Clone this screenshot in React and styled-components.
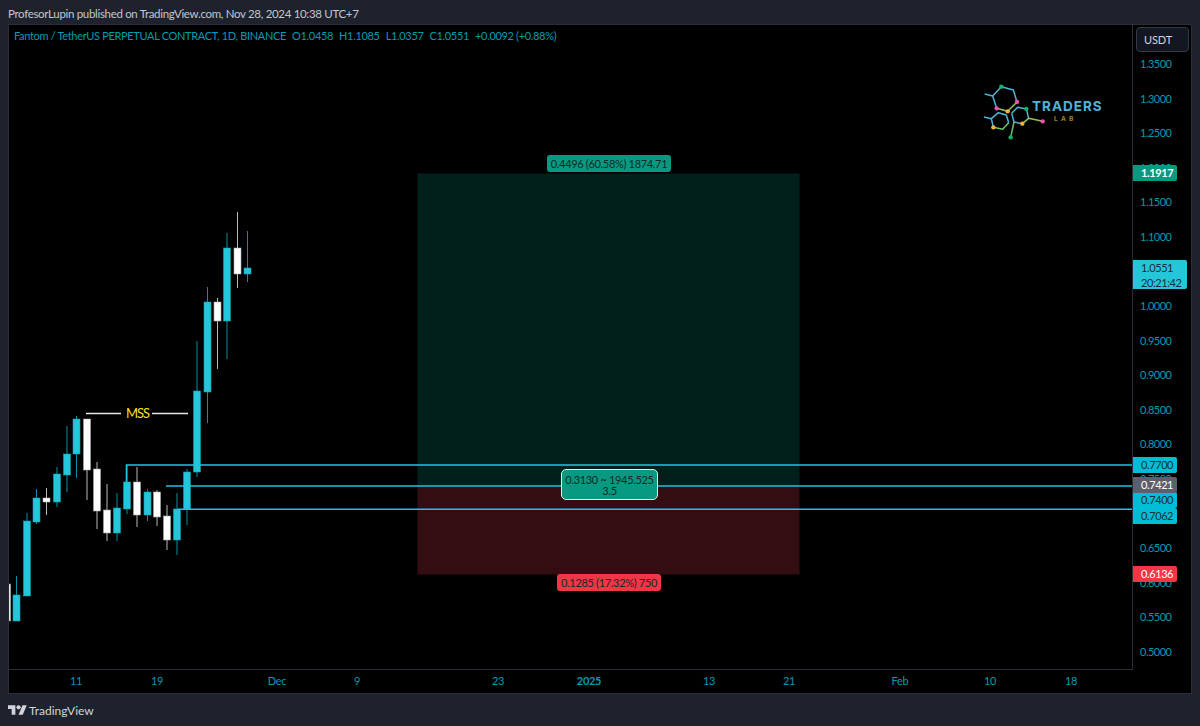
import React from "react";
import styled, { createGlobalStyle } from "styled-components";

const FONT = `Lato, "Noto Sans", "Liberation Sans", sans-serif`;
const TEAL = "#009bb0";
const CYAN = "#26c6da";
const LINE = "#1cc6de";

const Global = createGlobalStyle`
  html, body { margin: 0; padding: 0; background: #1e222d; }
  body { font-family: ${FONT}; overflow: hidden; }
`;

const Page = styled.div`
  width: 1200px;
  height: 726px;
  display: flex;
  flex-direction: column;
  background: #1e222d;
`;
const Header = styled.header`
  height: 24px;
  flex: none;
  display: flex;
  align-items: center;
  padding-left: 8px;
  padding-top: 2px;
  box-sizing: border-box;
  font-size: 11.5px;
  letter-spacing: -0.32px;
  color: #c3c6ce;
  white-space: nowrap;
`;
const Frame = styled.main`
  flex: none;
  height: 670px;
  margin: 0 8px;
  border: 1px solid #2a2e39;
  box-sizing: border-box;
  display: grid;
  grid-template-columns: 1124px 58px;
  grid-template-rows: 645px 23px;
  background: #000;
`;
const Plot = styled.section`
  grid-column: 1;
  grid-row: 1;
  position: relative;
  overflow: hidden;
  border-right: 1px solid #2a2e39;
  border-bottom: 1px solid #2a2e39;
  box-sizing: border-box;
`;
const ChartSvg = styled.svg`
  position: absolute;
  left: 0;
  top: 0;
  display: block;
`;
const Legend = styled.div`
  position: absolute;
  left: 5px;
  top: 3px;
  display: flex;
  gap: 6px;
  font-size: 11px;
  line-height: 16px;
  letter-spacing: -0.33px;
  color: ${TEAL};
  white-space: nowrap;
`;
const Mss = styled.span`
  position: absolute;
  left: 117px;
  top: 380px;
  font-size: 13px;
  line-height: 16px;
  letter-spacing: -1px;
  color: #f5e020;
`;
const Bubble = styled.div`
  position: absolute;
  box-sizing: border-box;
  left: ${(p) => p.$x}px;
  top: ${(p) => p.$y}px;
  width: ${(p) => p.$w}px;
  height: ${(p) => p.$h}px;
  background: ${(p) => p.$bg};
  border: ${(p) => (p.$outlined ? "1px solid #e6ece9" : "none")};
  border-radius: ${(p) => (p.$outlined ? 5 : 3)}px;
  color: #102a26;
  font-size: 11px;
  letter-spacing: -0.32px;
  line-height: 11px;
  text-align: center;
  display: flex;
  flex-direction: column;
  justify-content: center;
  white-space: nowrap;
`;
const Logo = styled.div`
  position: absolute;
  left: 965px;
  top: 34px;
  width: 130px;
  height: 85px;
`;
const LogoMark = styled.svg`
  position: absolute;
  left: 0;
  top: 0;
`;
const LogoTitle = styled.span`
  position: absolute;
  left: 58px;
  top: 39px;
  font-family: Inter, sans-serif;
  font-weight: 700;
  font-size: 13.5px;
  line-height: 16px;
  letter-spacing: 1px;
  color: #4fb3d9;
`;
const LogoSub = styled.span`
  position: absolute;
  left: 80px;
  top: 56px;
  font-family: Inter, sans-serif;
  font-weight: 700;
  font-size: 6.5px;
  line-height: 8px;
  letter-spacing: 3.2px;
  color: #a8842f;
`;
const PriceAxis = styled.aside`
  grid-column: 2;
  grid-row: 1 / 3;
  position: relative;
  background: #000;
  overflow: hidden;
`;
const Unit = styled.button`
  position: absolute;
  left: 3px;
  top: 2px;
  width: 53px;
  height: 25px;
  padding: 0 0 0 7px;
  box-sizing: border-box;
  text-align: left;
  font-family: ${FONT};
  font-size: 11px;
  letter-spacing: -0.1px;
  color: #d1d4dc;
  background: #131722;
  border: 1px solid #363a45;
  border-radius: 4px;
`;
const Tick = styled.span`
  position: absolute;
  left: 7px;
  font-size: 11px;
  letter-spacing: -0.5px;
  line-height: 14px;
  transform: translateY(-50%);
  color: ${TEAL};
`;
const Tag = styled.span`
  position: absolute;
  left: 0;
  width: ${(p) => p.$w || 44}px;
  height: ${(p) => p.$h || 16}px;
  box-sizing: border-box;
  padding: 0 0 0 8px;
  background: ${(p) => p.$bg};
  color: ${(p) => p.$fg};
  font-size: 11px;
  letter-spacing: -0.4px;
  font-weight: ${(p) => p.$weight || 400};
  line-height: 15px;
  border-radius: 0 2px 2px 0;
  white-space: pre-line;
`;
const TimeAxis = styled.footer`
  grid-column: 1;
  grid-row: 2;
  position: relative;
  background: #000;
`;
const TimeTick = styled.span`
  position: absolute;
  top: 3px;
  transform: translateX(-50%);
  font-size: 11px;
  letter-spacing: -0.3px;
  line-height: 16px;
  font-weight: ${(p) => (p.$bold ? 700 : 400)};
  color: ${TEAL};
`;
const Footer = styled.div`
  flex: 1;
  display: flex;
  align-items: center;
  gap: 2px;
  padding: 0 0 0 8px;
  color: #d1d4dc;
  font-size: 12px;
`;

// [centre x, wick top, wick bottom, body top, body bottom, up?]  in page pixels
const CANDLES = [
  [9.5, 584, 621, 584, 621, 0],
  [16.5, 576, 621, 595, 621, 1],
  [27, 513, 596, 521, 596, 1],
  [36.5, 489, 524, 498, 522, 1],
  [46.5, 488, 515, 498, 502, 0],
  [57, 467, 507, 474, 502, 1],
  [67, 426, 492, 454, 475, 1],
  [76.5, 416, 478, 419, 454, 1],
  [87, 419, 500, 419, 470, 0],
  [97, 462, 529, 469, 511, 0],
  [107, 484, 541, 510, 533, 0],
  [117, 493, 541, 508, 533, 1],
  [127, 465, 514, 482, 509, 1],
  [137, 467, 527, 482, 515, 0],
  [147.5, 489, 521, 492, 515, 1],
  [157, 490, 526, 492, 517, 0],
  [167, 505, 550, 516, 540, 0],
  [177, 493, 555, 509, 540, 1],
  [187, 469, 525, 472, 509, 1],
  [197, 341, 477, 391, 472, 1],
  [207.5, 287, 423, 302, 392, 1],
  [217.5, 298, 369, 302, 321, 0],
  [227, 233, 359, 248, 321, 1],
  [237.5, 212, 288, 248, 274, 0],
  [247.5, 231, 282, 268, 274, 1],
];

const TICKS = ["1.3500","1.3000","1.2500","1.2000","1.1500","1.1000","1.0000","0.9500","0.9000","0.8500","0.8000","0.7500","0.7000","0.6500","0.6000","0.5500","0.5000"];
const priceY = (p) => 64 + (1.35 - p) * 691.8;

const TIMES = [
  ["11", 76], ["19", 157], ["Dec", 277], ["9", 357], ["23", 498], ["2025", 589, true],
  ["13", 709], ["21", 789], ["Feb", 900], ["10", 990], ["18", 1071],
];

const TAGS = [
  { t: "1.1917", y: 165, bg: "#089981", fg: "#fff", weight: 700 },
  { t: "1.0551\n20:21:42", y: 260, h: 29, w: 54, bg: CYAN, fg: "#14303a" },
  { t: "0.7700", y: 457, bg: "#00bcd4", fg: "#14303a" },
  { t: "0.7400", y: 492, bg: "#00bcd4", fg: "#14303a" },
  { t: "0.7062", y: 508, bg: "#00bcd4", fg: "#14303a" },
  { t: "0.7421", y: 477, bg: "#5d606b", fg: "#fff" },
  { t: "0.6136", y: 566, bg: "#f23645", fg: "#fff" },
];

function Candle({ c }) {
  const [x, wt, wb, bt, bb, up] = c;
  return (
    <g>
      <line x1={x} x2={x} y1={wt} y2={wb} stroke={up ? "#0d8fa1" : "#b9b9b9"} strokeWidth="1" />
      <rect
        x={x < 10 ? 9 : x - 3.5}
        y={bt}
        width={x < 10 ? 1.5 : 7}
        height={bb - bt}
        fill={up ? CYAN : "#fff"}
        stroke={up ? "#0e9db0" : "#a8a8a8"}
        strokeWidth="0.6"
      />
    </g>
  );
}

function Chart() {
  return (
    <ChartSvg width="1123" height="644" viewBox="9 25 1123 644">
      <rect x="417.5" y="173.5" width="382" height="313" fill="#01201b" />
      <rect x="417.5" y="486.5" width="382" height="88" fill="#330d11" />
      {CANDLES.map((c, i) => <Candle key={i} c={c} />)}
      <path d="M126.5 482V465H1132" fill="none" stroke={LINE} strokeWidth="1.6" />
      <path d="M166 486H1132" fill="none" stroke={LINE} strokeWidth="1.6" />
      <path d="M178 509.3H1132" fill="none" stroke={LINE} strokeWidth="1.6" />
      <path d="M86 413.4H121M152 413.4H188" stroke="#e8e8e8" strokeWidth="1.5" />
    </ChartSvg>
  );
}

function LogoDrawing() {
  return (
    <LogoMark width="130" height="85" viewBox="42 177 390 255">
      <g fill="none" strokeWidth="4.5" strokeLinejoin="round">
        <path d="M74 282L98 288L110 325" stroke="#4fb3d9" />
        <path d="M98 288L124 260L160 270L171 306" stroke="#4fb3d9" />
        <path d="M171 306L143 334L110 325" stroke="#8cc852" />
        <path d="M72 351L94 356L115 338L139 345L146 368" stroke="#4fb3d9" />
        <path d="M94 356L100 382" stroke="#4fb3d9" />
        <path d="M146 368L128 388L100 382" stroke="#6cc070" />
        <path d="M155 340L173 322L199 327L206 355" stroke="#4fb3d9" />
        <path d="M155 340L162 366L187 371" stroke="#4fb3d9" />
        <path d="M187 371L206 355L248 364" stroke="#8cc852" />
        <path d="M162 366L152 412" stroke="#6cc070" />
      </g>
      <circle cx="124" cy="260" r="6.5" fill="#10b26c" />
      <circle cx="171" cy="306" r="6.5" fill="#f050b0" />
      <circle cx="143" cy="334" r="6.5" fill="#f5b040" />
      <circle cx="110" cy="325" r="6.5" fill="#f050b0" />
      <circle cx="100" cy="382" r="6.5" fill="#f5b040" />
      <circle cx="199" cy="327" r="6.5" fill="#10b26c" />
      <circle cx="187" cy="371" r="6.5" fill="#f5b040" />
      <circle cx="248" cy="364" r="6.5" fill="#f050b0" />
      <circle cx="152" cy="412" r="6.5" fill="#10b26c" />
    </LogoMark>
  );
}

export default function App() {
  return (
    <Page>
      <Global />
      <Header>ProfesorLupin published on TradingView.com, Nov 28, 2024 10:38 UTC+7</Header>
      <Frame>
        <Plot>
          <Chart />
          <Legend>
            <span>Fantom / TetherUS PERPETUAL CONTRACT, 1D, BINANCE</span>
            <span>O1.0458</span>
            <span>H1.1085</span>
            <span>L1.0357</span>
            <span>C1.0551</span>
            <span>+0.0092 (+0.88%)</span>
          </Legend>
          <Mss>MSS</Mss>
          <Logo>
            <LogoDrawing />
            <LogoTitle>TRADERS</LogoTitle>
            <LogoSub>LAB</LogoSub>
          </Logo>
          <Bubble $x={538} $y={130} $w={124} $h={17} $bg="#089981">0.4496 (60.58%) 1874.71</Bubble>
          <Bubble $x={552} $y={444} $w={97} $h={31} $bg="#089981" $outlined>
            <span>0.3130 ~ 1945.525</span>
            <span>3.5</span>
          </Bubble>
          <Bubble $x={548} $y={549} $w={104} $h={17} $bg="#f23645">0.1285 (17.32%) 750</Bubble>
        </Plot>
        <PriceAxis>
          <Unit>USDT</Unit>
          {TICKS.map((t) => (
            <Tick key={t} style={{ top: priceY(parseFloat(t)) - 25 }}>{t}</Tick>
          ))}
          {TAGS.map((g) => (
            <Tag key={g.t} $w={g.w} $h={g.h} $bg={g.bg} $fg={g.fg} $weight={g.weight} style={{ top: g.y - 25 }}>
              {g.t}
            </Tag>
          ))}
        </PriceAxis>
        <TimeAxis>
          {TIMES.map(([t, x, b]) => (
            <TimeTick key={t} $bold={b} style={{ left: x - 9 }}>{t}</TimeTick>
          ))}
        </TimeAxis>
      </Frame>
      <Footer>
        <svg width="19" height="15" viewBox="0 0 36 28" fill="#d1d4dc">
          <path d="M14 22H7V11H0V4h14v18zM28 22h-8l7.5-18h8L28 22z" />
          <circle cx="20" cy="8" r="4" />
        </svg>
        <span>TradingView</span>
      </Footer>
    </Page>
  );
}
